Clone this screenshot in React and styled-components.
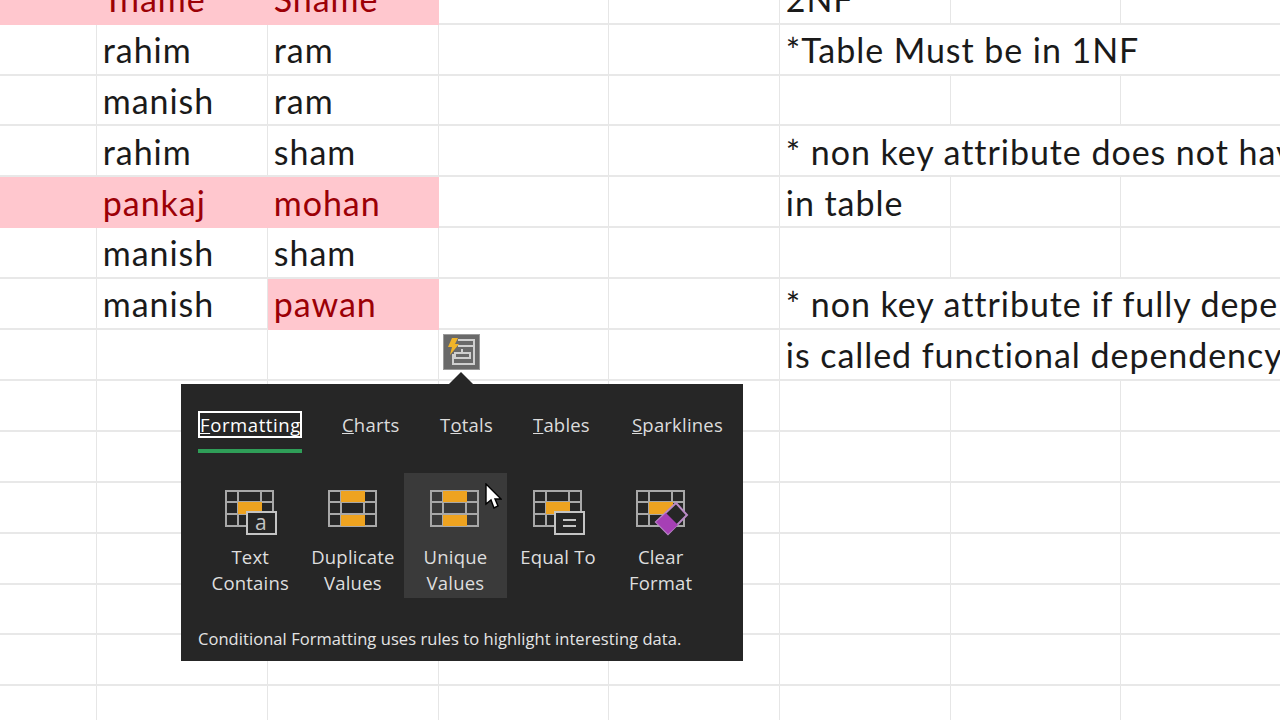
import styled, {createGlobalStyle} from "styled-components";

const GlobalStyle = createGlobalStyle`
    html, body {
        margin: 0;
        height: 100%;
        overflow: hidden;
        background: #fff;
    }
`;

const Sheet = styled.div`
    position: relative;
    height: 720px;
    overflow: hidden;
    font-family: "Lato", "Liberation Sans", sans-serif;
`;

const Rows = styled.div`
    margin-top: -26.2px;
`;

const Row = styled.div`
    display: grid;
    grid-template-columns: 96.8px 171px 171px 170.6px 170.4px 170.8px 170.8px 171px;
    grid-template-rows: 50.9px;
    height: 50.9px;
`;

const Cell = styled.div`
    grid-column: span ${props => props.$span || 1};
    height: 50.9px;
    box-sizing: border-box;
    border-right: 1.5px solid ${props => props.$pink ? "#ffc7ce" : "#e6e6e6"};
    border-bottom: 2px solid ${props => props.$pink ? "#ffc7ce" : "#e8e8e8"};
    background: ${props => props.$pink ? "#ffc7ce" : "#fff"};
    color: ${props => props.$pink ? "#9c0006" : "#1a1a1a"};
    font-size: 34px;
    letter-spacing: 0.95px;
    line-height: 48px;
    padding: 1.2px 0 0 6px;
    white-space: nowrap;
    overflow: ${props => props.$clip ? "hidden" : "visible"};
`;

const QuickButton = styled.div`
    position: absolute;
    left: 443px;
    top: 334px;
    width: 37px;
    height: 36px;
    background: #696969;
    border: 1px solid #9a9a9a;
    box-sizing: border-box;
`;

const Popup = styled.div`
    position: absolute;
    left: 181px;
    top: 384px;
    width: 562px;
    height: 277px;
    box-sizing: border-box;
    padding: 27px 17px 0;
    background: #262626;
    color: #e2e2e2;
    font-family: "Open Sans", "Noto Sans", sans-serif;

    &::before {
        content: "";
        position: absolute;
        left: 268px;
        top: -12px;
        border-left: 12px solid transparent;
        border-right: 12px solid transparent;
        border-bottom: 12px solid #262626;
    }
`;

const Tabs = styled.div`
    display: flex;
    height: 42px;
`;

const Tab = styled.div`
    width: ${props => props.$width}px;
    margin-right: ${props => props.$gap}px;
    box-sizing: border-box;
    text-align: ${props => props.$active ? "center" : "left"};
    font-size: 18.5px;
    height: 27px;
    line-height: ${props => props.$active ? "24px" : "28px"};
    letter-spacing: ${props => props.$active ? "0.6px" : "0.2px"};
    color: ${props => props.$active ? "#fff" : "#dcdcdc"};
    border: ${props => props.$active ? "2px solid #fff" : "0"};
    white-space: nowrap;
    position: relative;

    ${props => props.$active && `
        &::after {
            content: "";
            position: absolute;
            left: -2px;
            right: -2px;
            top: 36px;
            height: 4px;
            background: #2f9e58;
        }
    `}
`;

const Items = styled.div`
    display: flex;
    margin: 20px 0 0 1px;
`;

const Item = styled.div`
    width: 102.6px;
    height: 125px;
    flex: none;
    box-sizing: border-box;
    padding-top: 17px;
    display: flex;
    flex-direction: column;
    align-items: center;
    background: ${props => props.$hover ? "#3a3a3a" : "transparent"};
    font-size: 18.5px;
    line-height: 26.5px;
    letter-spacing: 0.2px;
    text-align: center;
    color: #dedede;

    svg {
        display: block;
        margin-left: 4px;
        margin-bottom: 7.5px;
    }
`;

const Caption = styled.div`
    margin-top: 28px;
    font-size: 16.5px;
    line-height: 26px;
    letter-spacing: 0.06px;
    color: #e4e4e4;
    white-space: nowrap;
`;

const Pointer = styled.svg`
    position: absolute;
    left: 484px;
    top: 483px;
`;

const rows = [
    [{pink: true}, {pink: true, text: "Tname"}, {pink: true, text: "Sname"}, {}, {span: 1}, {text: "2NF"}, {}, {}],
    [{}, {text: "rahim"}, {text: "ram"}, {}, {}, {span: 3, text: "*Table Must be in 1NF"}],
    [{}, {text: "manish"}, {text: "ram"}, {}, {}, {}, {}, {}],
    [{}, {text: "rahim"}, {text: "sham"}, {}, {}, {span: 3, text: "* non key attribute does not have partial dependency", clip: true}],
    [{pink: true}, {pink: true, text: "pankaj"}, {pink: true, text: "mohan"}, {}, {}, {span: 1, text: "in table"}, {}, {}],
    [{}, {text: "manish"}, {text: "sham"}, {}, {}, {}, {}, {}],
    [{}, {text: "manish"}, {pink: true, text: "pawan"}, {}, {}, {span: 3, text: "* non key attribute if fully dependent on primary key", clip: true}],
    [{}, {}, {}, {}, {}, {span: 3, text: "is called functional dependency", clip: true}],
    [{}, {}, {}, {}, {}, {}, {}, {}],
    [{}, {}, {}, {}, {}, {}, {}, {}],
    [{}, {}, {}, {}, {}, {}, {}, {}],
    [{}, {}, {}, {}, {}, {}, {}, {}],
    [{}, {}, {}, {}, {}, {}, {}, {}],
    [{}, {}, {}, {}, {}, {}, {}, {}],
    [{}, {}, {}, {}, {}, {}, {}, {}],
];

function TableIcon({fill, children}) {
    return (
        <svg width="54" height="46" viewBox="0 0 54 46" style={{overflow: "visible"}}>
            <path d="M1 1H48V36H1ZM1 12H48M1 24H48M13 1V36M36 1V36" fill="none" stroke="#a8a8a8" strokeWidth="2"/>
            {fill === "middle" && <rect x="13" y="12" width="24" height="12" fill="#eea320"/>}
            {fill === "outer" && <>
                <rect x="13" y="1" width="24" height="11" fill="#eea320"/>
                <rect x="13" y="25" width="24" height="11" fill="#eea320"/>
            </>}
            {children}
        </svg>
    );
}

function Badge({children}) {
    return (
        <>
            <rect x="22" y="22" width="29" height="22" fill="#262626" stroke="#c4c4c4" strokeWidth="2"/>
            {children}
        </>
    );
}

export default function App() {
    return (
        <Sheet>
            <GlobalStyle/>
            <Rows>
                {rows.map((row, i) => (
                    <Row key={i}>
                        {row.map((cell, j) => (
                            <Cell key={j} $span={cell.span} $pink={cell.pink} $clip={cell.clip}>{cell.text}</Cell>
                        ))}
                    </Row>
                ))}
            </Rows>

            <QuickButton>
                <svg width="35" height="34" viewBox="0 0 35 34">
                    <path d="M14 5H30V29H9V19M14 11H29M18 14V18" fill="none" stroke="#cfcfcf" strokeWidth="2"/>
                    <rect x="11" y="18" width="15" height="5" fill="none" stroke="#cfcfcf" strokeWidth="2"/>
                    <path d="M8 3H14L11 9H15L6 20L8 12H4Z" fill="#f0b429"/>
                </svg>
            </QuickButton>

            <Popup>
                <Tabs>
                    <Tab $active $width={104} $gap={40}><u>F</u>ormatting</Tab>
                    <Tab $width={58} $gap={40}><u>C</u>harts</Tab>
                    <Tab $width={53} $gap={40}>T<u>o</u>tals</Tab>
                    <Tab $width={59} $gap={40}><u>T</u>ables</Tab>
                    <Tab $width={92} $gap={0}><u>S</u>parklines</Tab>
                </Tabs>
                <Items>
                    <Item>
                        <TableIcon fill="middle">
                            <Badge>
                                <text x="36" y="40" fontSize="21" fill="#c4c4c4" textAnchor="middle" fontFamily="Open Sans">a</text>
                            </Badge>
                        </TableIcon>
                        <span>Text<br/>Contains</span>
                    </Item>
                    <Item>
                        <TableIcon fill="outer"/>
                        <span>Duplicate<br/>Values</span>
                    </Item>
                    <Item $hover>
                        <TableIcon fill="outer"/>
                        <span>Unique<br/>Values</span>
                    </Item>
                    <Item>
                        <TableIcon fill="middle">
                            <Badge>
                                <path d="M30 30H43M30 36H43" stroke="#c4c4c4" strokeWidth="2"/>
                            </Badge>
                        </TableIcon>
                        <span>Equal To</span>
                    </Item>
                    <Item>
                        <TableIcon fill="middle">
                            <path d="M40 13L51 25L32 44L20 32Z" fill="#262626" stroke="#b98ac6" strokeWidth="2"/>
                            <path d="M20 32L30 23L42 35L32 44Z" fill="#a63fb5"/>
                        </TableIcon>
                        <span>Clear<br/>Format</span>
                    </Item>
                </Items>
                <Caption>Conditional Formatting uses rules to highlight interesting data.</Caption>
            </Popup>

            <Pointer width="18" height="27" viewBox="0 0 18 27">
                <path d="M2 1V21L7 17L10 25L14 23L11 16H17Z" fill="#fff" stroke="#000" strokeWidth="1.4"/>
            </Pointer>
        </Sheet>
    );
}
